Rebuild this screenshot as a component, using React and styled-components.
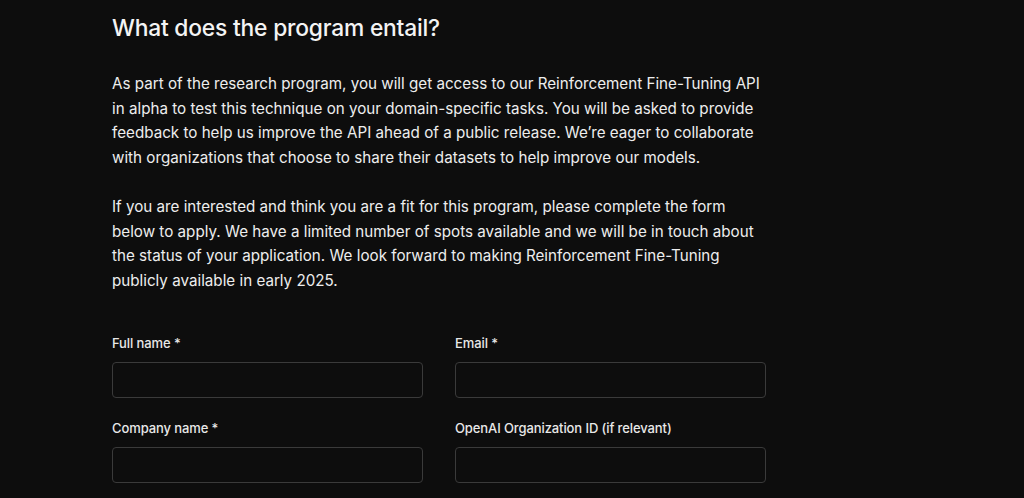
import styled, { createGlobalStyle } from 'styled-components';

const Global = createGlobalStyle`
  * {
    margin: 0;
    padding: 0;
    box-sizing: border-box;
  }
  body {
    background: #0d0d0d;
    color: #ececec;
    font-family: Inter, 'Noto Sans', sans-serif;
  }
`;

const Page = styled.main`
  width: 656px;
  margin-left: 112px;
  padding-top: 13px;
`;

const Title = styled.h2`
  font-size: 22.8px;
  font-weight: 500;
  line-height: 30px;
  letter-spacing: -0.2px;
  color: #f4f4f4;
  margin-bottom: 29px;
`;

const Para = styled.p`
  font-size: 15.2px;
  line-height: 24.7px;
  color: #ededed;
  margin-bottom: 24px;
`;

const Form = styled.form`
  margin-top: 41px;
  display: grid;
  grid-template-columns: 311px 311px;
  column-gap: 32px;
  row-gap: 22px;
`;

const Field = styled.div`
  display: flex;
  flex-direction: column;
`;

const Label = styled.label`
  font-size: 13px;
  font-weight: 500;
  line-height: 16px;
  letter-spacing: -0.1px;
  color: #e8e8e8;
  margin-bottom: 11px;
`;

const Input = styled.input`
  height: 36px;
  width: 100%;
  background: #0d0d0d;
  border: 1px solid #3a3a3a;
  border-radius: 4px;
  color: #fff;
  padding: 0 10px;
  font: inherit;
  outline: none;
`;

const fields = [
  'Full name *',
  'Email *',
  'Company name *',
  'OpenAI Organization ID (if relevant)',
];

export default function App() {
  return (
    <>
      <Global />
      <Page>
        <Title>What does the program entail?</Title>
        <Para>
          As part of the research program, you will get access to our Reinforcement Fine-Tuning API
          in alpha to test this technique on your domain-specific tasks. You will be asked to provide
          feedback to help us improve the API ahead of a public release. We’re eager to collaborate
          with organizations that choose to share their datasets to help improve our models.
        </Para>
        <Para>
          If you are interested and think you are a fit for this program, please complete the form
          below to apply. We have a limited number of spots available and we will be in touch about
          the status of your application. We look forward to making Reinforcement Fine-Tuning
          publicly available in early 2025.
        </Para>
        <Form>
          {fields.map((f) => (
            <Field key={f}>
              <Label>{f}</Label>
              <Input type="text" />
            </Field>
          ))}
        </Form>
      </Page>
    </>
  );
}
